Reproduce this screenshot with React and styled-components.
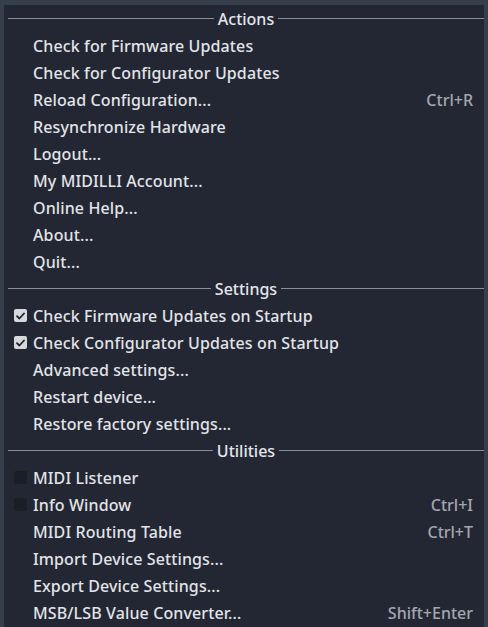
import styled, { createGlobalStyle } from 'styled-components';

const GlobalStyle = createGlobalStyle`
	html, body {
		margin: 0;
		padding: 0;
		background: #363d4b;
		width: 488px;
		height: 627px;
		overflow: hidden;
	}
	* {
		box-sizing: border-box;
	}
`

const Frame = styled.div`
	width: 488px;
	height: 627px;
	padding: 5px 4px 0 4px;
	background: #363d4b;
	font-family: "Noto Sans", "Open Sans", sans-serif;
	font-weight: 500;
`

const Panel = styled.div`
	height: 100%;
	background: #232733;
	display: flex;
	flex-direction: column;
`

const SectionHeader = styled.div`
	height: 27px;
	display: flex;
	align-items: center;
	gap: 4px;
	padding: 0 0 0 4px;
	color: #e4e6ea;
	font-size: 16px;

	&::before, &::after {
		content: '';
		flex: 1;
		height: 1px;
		background: #8a8f9a;
	}
`

const Row = styled.div`
	height: 27px;
	display: flex;
	align-items: center;
	padding: 0 11px 0 10px;
	font-size: 16px;
	color: #e2e4e8;
	white-space: nowrap;
`

const CheckSlot = styled.div`
	width: 19px;
	flex: none;
	display: flex;
	align-items: center;
`

const CheckBox = styled.div`
	width: 13px;
	height: 13px;
	border-radius: 2px;
	background: ${p => (p.$checked ? '#d6d8dc' : '#1b1e27')};
	display: flex;
	align-items: center;
	justify-content: center;
`

const Label = styled.span`
	flex: 1;
	letter-spacing: 0.12px;
`

const Shortcut = styled.span`
	color: #a3a7b0;
	font-size: 16px;
`

const sections = [
	{
		title: 'Actions',
		items: [
			{ label: 'Check for Firmware Updates' },
			{ label: 'Check for Configurator Updates' },
			{ label: 'Reload Configuration...', shortcut: 'Ctrl+R' },
			{ label: 'Resynchronize Hardware' },
			{ label: 'Logout...' },
			{ label: 'My MIDILLI Account...' },
			{ label: 'Online Help...' },
			{ label: 'About...' },
			{ label: 'Quit...' },
		],
	},
	{
		title: 'Settings',
		items: [
			{ label: 'Check Firmware Updates on Startup', check: true },
			{ label: 'Check Configurator Updates on Startup', check: true },
			{ label: 'Advanced settings...' },
			{ label: 'Restart device...' },
			{ label: 'Restore factory settings...' },
		],
	},
	{
		title: 'Utilities',
		items: [
			{ label: 'MIDI Listener', check: false },
			{ label: 'Info Window', check: false, shortcut: 'Ctrl+I' },
			{ label: 'MIDI Routing Table', shortcut: 'Ctrl+T' },
			{ label: 'Import Device Settings...' },
			{ label: 'Export Device Settings...' },
			{ label: 'MSB/LSB Value Converter...', shortcut: 'Shift+Enter' },
		],
	},
]

const CheckMark = () => (
	<svg width="9" height="8" viewBox="0 0 9 8">
		<path d="M1 4.2 L3.4 6.5 L8 1.5" fill="none" stroke="#1f222b" strokeWidth="1.8" strokeLinecap="round" strokeLinejoin="round" />
	</svg>
)

const MenuRow = ({ item }) => (
	<Row>
		<CheckSlot>
			{item.check !== undefined && (
				<CheckBox $checked={item.check}>{item.check && <CheckMark />}</CheckBox>
			)}
		</CheckSlot>
		<Label>{item.label}</Label>
		{item.shortcut && <Shortcut>{item.shortcut}</Shortcut>}
	</Row>
)

const App = () => {
	return (
		<Frame>
			<GlobalStyle />
			<Panel>
				{sections.map((section) => (
					<div key={section.title}>
						<SectionHeader>{section.title}</SectionHeader>
						{section.items.map((item) => (
							<MenuRow key={item.label} item={item} />
						))}
					</div>
				))}
			</Panel>
		</Frame>
	)
}
export default App;
